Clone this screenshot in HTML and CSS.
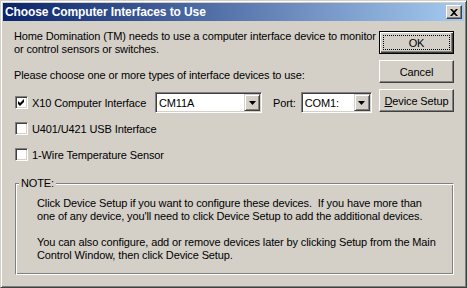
FILE: index.html
```html
<!DOCTYPE html>
<html lang="en">
<head>
<meta charset="UTF-8">
<meta name="viewport" content="width=device-width,initial-scale=1.0">
<title>Choose Computer Interfaces to Use</title>
<link rel="stylesheet" href="styles.css">
</head>
<body>

<!-- ===== Dialog window ===== -->
<div class="window">
  <div class="titlebar">
    <span class="title">Choose Computer Interfaces to Use</span>
    <button class="close-btn" aria-label="Close">
      <svg width="8" height="7" viewBox="0 0 8 7"><path d="M0 0h2l2 2 2-2h2L5 3.5 8 7H6L4 5 2 7H0l3-3.5z" fill="#000"/></svg>
    </button>
  </div>

  <div class="client">
    <div class="top">
      <div class="left">
        <p class="intro">Home Domination (TM) needs to use a computer interface device to monitor<br>or control sensors or switches.</p>
        <p class="prompt">Please choose one or more types of interface devices to use:</p>

        <div class="rows">
          <div class="row">
            <label class="check x10">
              <span class="box"><svg width="9" height="9" viewBox="0 0 9 9"><path d="M1 3l2 2 4-4v3l-4 4-2-2z" fill="#000"/></svg></span>
              X10 Computer Interface
            </label>
            <div class="combo combo-model">
              <span class="value">CM11A</span>
              <span class="drop"><svg width="7" height="4" viewBox="0 0 7 4"><path d="M0 0h7L3.5 4z" fill="#000"/></svg></span>
            </div>
            <span class="port-label">Port:</span>
            <div class="combo combo-port">
              <span class="value">COM1:</span>
              <span class="drop"><svg width="7" height="4" viewBox="0 0 7 4"><path d="M0 0h7L3.5 4z" fill="#000"/></svg></span>
            </div>
          </div>
          <div class="row">
            <label class="check"><span class="box"></span>U401/U421 USB Interface</label>
          </div>
          <div class="row">
            <label class="check"><span class="box"></span>1-Wire Temperature Sensor</label>
          </div>
        </div>
      </div>

      <div class="buttons">
        <button class="btn default"><span class="focus">OK</span></button>
        <button class="btn">Cancel</button>
        <button class="btn"><u>D</u>evice Setup</button>
      </div>
    </div>

    <!-- NOTE group box -->
    <div class="group">
      <span class="group-label">NOTE:</span>
      <p>Click Device Setup if you want to configure these devices.&nbsp; If you have more than<br>one of any device, you'll need to click Device Setup to add the additional devices.</p>
      <p>You can also configure, add or remove devices later by clicking Setup from the Main<br>Control Window, then click Device Setup.</p>
    </div>
  </div>
</div>

</body>
</html>
```

FILE: styles.css
```css
:root{
  --face:#D4D0C8;
  --shadow:#808080;
  --dark:#404040;
  font-family:'Liberation Sans',Arial,sans-serif;
  font-size:11px;
  letter-spacing:-.12px;
}
*{box-sizing:border-box}
body,html{margin:0;padding:0;background:var(--face)}
p{margin:0}

/* ===== Window frame ===== */
.window{
  width:467px;height:288px;background:var(--face);color:#000;
  display:flex;flex-direction:column;padding:2px;
  border:1px solid;border-color:var(--face) var(--dark) var(--dark) var(--face);
  box-shadow:inset 1px 1px 0 #fff,inset -1px -1px 0 var(--shadow);
}
.titlebar{
  height:18px;display:flex;align-items:center;justify-content:space-between;
  padding:0 2px 0 2px;
  background:linear-gradient(90deg,#0A246A 0%,#A6CAF0 100%);
}
.title{
  color:#fff;font-weight:700;font-size:12px;letter-spacing:-.1px;
  font-family:'Liberation Sans',Arial,sans-serif;
}
.close-btn{
  width:16px;height:14px;padding:0;margin:0;display:flex;
  align-items:center;justify-content:center;background:var(--face);
  border:1px solid;border-color:#fff var(--dark) var(--dark) #fff;
  box-shadow:inset -1px -1px 0 var(--shadow);
}

/* ===== Client area ===== */
.client{flex:1;display:flex;flex-direction:column;padding:9px 10px 0 11px}
.top{display:flex;gap:7px}
.left{flex:1;min-width:0}
.intro,.prompt{line-height:13px;white-space:nowrap}
.prompt{margin-top:13px}

.rows{display:flex;flex-direction:column;gap:5px;margin-top:10px}
.row{height:21px;display:flex;align-items:center}
.check{display:flex;align-items:center;gap:4px;padding-left:1px;white-space:nowrap}
.check.x10{width:141px}
.box{
  width:13px;height:13px;background:#fff;display:flex;
  align-items:center;justify-content:center;
  border:1px solid;border-color:var(--shadow) #fff #fff var(--shadow);
  box-shadow:inset 1px 1px 0 var(--dark),inset -1px -1px 0 var(--face);
}

/* combo boxes */
.combo{
  height:21px;display:flex;align-items:stretch;background:#fff;padding:1px;
  border:1px solid;border-color:var(--shadow) #fff #fff var(--shadow);
  box-shadow:inset 1px 1px 0 var(--dark),inset -1px -1px 0 var(--face);
}
.combo-model{width:107px}
.combo-port{width:71px}
.combo .value{flex:1;padding:3px 0 0 2px;line-height:13px}
.drop{
  width:16px;display:flex;align-items:center;justify-content:center;
  background:var(--face);
  border:1px solid;border-color:var(--face) var(--dark) var(--dark) var(--face);
  box-shadow:inset 1px 1px 0 #fff,inset -1px -1px 0 var(--shadow);
}
.port-label{margin:0 5px 0 11px}

/* push buttons */
.buttons{width:75px;flex:none;display:flex;flex-direction:column;gap:6px;margin-top:1px}
.btn{
  height:23px;width:75px;padding:0;background:var(--face);color:#000;
  font-family:inherit;font-size:11px;letter-spacing:inherit;
  border:1px solid;border-color:#fff var(--dark) var(--dark) #fff;
  box-shadow:inset -1px -1px 0 var(--shadow);
}
.btn.default{
  border:1px solid #000;display:flex;padding:3px;
  box-shadow:inset 1px 1px 0 #fff,inset -1px -1px 0 var(--dark),inset -2px -2px 0 var(--shadow);
}
.btn .focus{
  flex:1;border:1px dotted #000;display:flex;
  align-items:center;justify-content:center;
}

/* ===== NOTE group box ===== */
.group{
  position:relative;margin:18px 0 0 1px;padding:13px 0 12px 21px;
  line-height:13px;
  border:1px solid;border-color:var(--shadow) #fff #fff var(--shadow);
  box-shadow:inset 1px 1px 0 #fff,inset -1px -1px 0 var(--shadow);
}
.group p + p{margin-top:13px}
.group-label{
  position:absolute;top:-7px;left:3px;padding:0 2px;
  background:var(--face);line-height:13px;
}
```
